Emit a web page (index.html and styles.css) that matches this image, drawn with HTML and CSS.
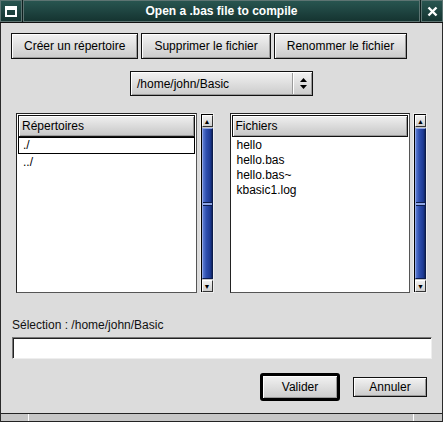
FILE: index.html
```html
<!DOCTYPE html>
<html lang="fr">

<head>
    <meta charset="UTF-8">
    <meta name="viewport" content="width=device-width, initial-scale=1.0">
    <title>Open a .bas file to compile</title>
    <link rel="stylesheet" href="styles.css">
</head>

<body>
    <div class="window">
        <div class="titlebar">
            <div class="tb-btn">
                <svg width="12" height="11" viewBox="0 0 12 11">
                    <rect x="1" y="1" width="10" height="9" fill="none" stroke="#fff" stroke-width="2"/>
                    <rect x="1" y="1" width="10" height="3" fill="#fff"/>
                </svg>
            </div>
            <div class="tb-title">Open a .bas file to compile</div>
            <div class="tb-btn">
                <svg width="11" height="11" viewBox="0 0 11 11">
                    <path d="M1.5 1.5 L9.5 9.5 M9.5 1.5 L1.5 9.5" stroke="#fff" stroke-width="2.4"/>
                </svg>
            </div>
        </div>

        <div class="content">
            <div class="actions">
                <button class="btn">Créer un répertoire</button>
                <button class="btn">Supprimer le fichier</button>
                <button class="btn">Renommer le fichier</button>
            </div>

            <div class="path-row">
                <div class="combo">
                    <span class="combo-text">/home/john/Basic</span>
                    <span class="combo-arrow">
                        <svg width="7" height="11" viewBox="0 0 7 11">
                            <path d="M3.5 0 L7 4 L0 4 Z M0 7 L7 7 L3.5 11 Z" fill="#000"/>
                        </svg>
                    </span>
                </div>
            </div>

            <div class="lists">
                <div class="list-group">
                    <div class="list">
                        <div class="list-head">Répertoires</div>
                        <div class="list-row focus">./</div>
                        <div class="list-row">../</div>
                    </div>
                    <div class="scrollbar">
                        <div class="sb-arrow">▲</div>
                        <div class="sb-thumb"><span class="grip"></span></div>
                        <div class="sb-arrow">▼</div>
                    </div>
                </div>
                <div class="list-group">
                    <div class="list">
                        <div class="list-head">Fichiers</div>
                        <div class="list-row">hello</div>
                        <div class="list-row">hello.bas</div>
                        <div class="list-row">hello.bas~</div>
                        <div class="list-row">kbasic1.log</div>
                    </div>
                    <div class="scrollbar">
                        <div class="sb-arrow">▲</div>
                        <div class="sb-thumb"><span class="grip"></span></div>
                        <div class="sb-arrow">▼</div>
                    </div>
                </div>
            </div>

            <div class="selection">Sélection : /home/john/Basic</div>
            <input type="text" class="sel-input">

            <div class="dialog-buttons">
                <div class="default-frame"><button class="btn btn-ok">Valider</button></div>
                <button class="btn btn-cancel">Annuler</button>
            </div>
        </div>

        <div class="statusbar">
            <span class="sb-cell first"></span>
            <span class="sb-cell mid"></span>
            <span class="sb-cell"></span>
        </div>
    </div>
</body>

</html>
```

FILE: styles.css
```css
* {
    box-sizing: border-box;
}

body {
    margin: 0;
    font-family: "Liberation Sans", Arial, sans-serif;
    font-size: 12px;
    color: #000;
    background: #dcdcdc;
}

.window {
    width: 443px;
    height: 422px;
    display: flex;
    flex-direction: column;
    background: #dcdcdc;
    border-left: 1px solid #2a2a2a;
    border-right: 1px solid #2a2a2a;
}

/* title bar */
.titlebar {
    display: flex;
    height: 23px;
    background: #0e1f1e;
    border-bottom: 1px solid #111;
    gap: 1px;
    margin: 0 -1px;
}

.tb-btn,
.tb-title {
    background: linear-gradient(#285550, #153431);
    border: 1px solid #5d7472;
    height: 22px;
}

.tb-btn {
    width: 22px;
    display: flex;
    align-items: center;
    justify-content: center;
}

.tb-title {
    flex: 1;
    color: #fff;
    font-weight: bold;
    font-size: 12px;
    text-align: center;
    line-height: 20px;
}

.content {
    flex: 1;
    padding: 0 11px 0 10px;
    display: flex;
    flex-direction: column;
}

/* buttons */
.btn {
    font-family: inherit;
    font-size: 12px;
    color: #000;
    background: linear-gradient(#f2f2f2, #cbcbcb);
    border: 1px solid #111;
    box-shadow: inset 1px 1px 0 #fff, inset -1px -1px 0 #9a9a9a;
    padding: 0 12px;
    cursor: pointer;
}

.actions {
    display: flex;
    gap: 3px;
    margin-top: 10px;
    height: 26px;
}

.path-row {
    display: flex;
    justify-content: center;
    margin-top: 12px;
}

.combo {
    width: 183px;
    height: 25px;
    display: flex;
    align-items: center;
    background: linear-gradient(#f2f2f2, #cbcbcb);
    border: 1px solid #111;
    box-shadow: inset 1px 1px 0 #fff, inset -1px -1px 0 #9a9a9a;
    margin-left: 1px;
}

.combo-text {
    flex: 1;
    padding-left: 6px;
}

.combo-arrow {
    width: 19px;
    height: 21px;
    display: flex;
    align-items: center;
    justify-content: center;
    border-left: 1px solid #fff;
    box-shadow: -1px 0 0 #9a9a9a;
}

/* file lists */
.lists {
    display: flex;
    gap: 16px;
    margin-top: 17px;
    padding: 0 4px 0 5px;
    height: 180px;
}

.list-group {
    flex: 1;
    display: flex;
    gap: 3px;
}

.list {
    flex: 1;
    background: #fff;
    border: 1px solid #222;
    border-right-color: #555;
    border-bottom-color: #555;
    padding: 1px;
}

.list-head {
    height: 22px;
    line-height: 20px;
    padding-left: 3px;
    background: linear-gradient(#f0f0f0, #c6c6c6);
    border: 1px solid #111;
    box-shadow: inset 1px 1px 0 #fff, inset -1px -1px 0 #9a9a9a;
    font-size: 12px;
}

.list-row {
    height: 15px;
    line-height: 14px;
    padding-left: 4px;
    border: 1px solid transparent;
}

.list-row.focus {
    height: 17px;
    line-height: 15px;
    border-color: #000;
}

.scrollbar {
    width: 14px;
    display: flex;
    flex-direction: column;
    background: #c6c6c6;
    border: 1px solid #eee;
    box-shadow: inset 1px 1px 0 #000;
    padding: 1px 0 0 1px;
}

.sb-arrow {
    height: 12px;
    font-size: 7px;
    line-height: 11px;
    text-align: center;
    background: linear-gradient(#f0f0f0, #cfcfcf);
    border: 1px solid #333;
    border-top-color: #fff;
    border-left-color: #fff;
}

.sb-thumb {
    flex: 1;
    display: flex;
    align-items: center;
    background: linear-gradient(90deg, #5a7ad0, #2e4fb0 35%, #1d3a94 80%, #10245e);
    border: 1px solid #0c1c4c;
    border-top-color: #8fa6e6;
    border-left-color: #8fa6e6;
    margin: 1px 0;
}

.grip {
    display: block;
    width: 100%;
    height: 4px;
    border-top: 1px solid #0c1c4c;
    border-bottom: 1px solid #0c1c4c;
    background: #8fa6e6;
}

/* selection */
.selection {
    margin: 25px 0 0 1px;
    line-height: 14px;
    color: #111;
}

.sel-input {
    margin: 5px 0 0 1px;
    height: 22px;
    width: 420px;
    background: #fff;
    border: 1px solid #777;
    border-right-color: #eee;
    border-bottom-color: #eee;
    box-shadow: inset 1px 1px 0 #222;
}

.dialog-buttons {
    display: flex;
    justify-content: flex-end;
    align-items: center;
    gap: 13px;
    margin-top: 14px;
    padding-right: 4px;
}

.default-frame {
    width: 80px;
    height: 28px;
    border: 3px solid #000;
    border-radius: 3px;
    display: flex;
}

.btn-ok {
    flex: 1;
    border: none;
    padding: 0;
}

.btn-cancel {
    width: 74px;
    height: 20px;
    padding: 0;
}

/* status bar */
.statusbar {
    display: flex;
    height: 9px;
    background: #c6c6c6;
    border-top: 1px solid #222;
    border-bottom: 1px solid #222;
}

.sb-cell {
    border-right: 1px solid #fff;
}

.sb-cell.first {
    width: 28px;
}

.sb-cell.mid {
    flex: 1;
}

.sb-cell:last-child {
    width: 28px;
    border-right: none;
}
```
